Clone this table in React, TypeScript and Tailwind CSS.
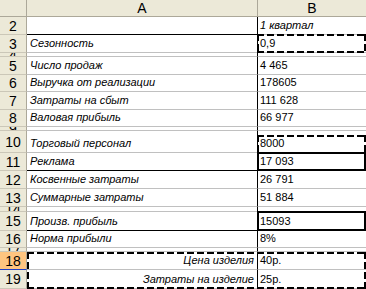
type Mark = 'dash' | 'dashTop' | 'solid';

interface Row {
  n: string;
  h: string;
  a?: string;
  b?: string;
  bi?: boolean;
  black?: boolean;
  mark?: Mark;
  right?: boolean;
  sel?: boolean;
}

const rows: Row[] = [
  { n: '2', h: 'h-[18px]', a: '', b: '1 квартал', bi: true, black: true },
  { n: '3', h: 'h-[18px]', a: 'Сезонность', b: '0,9', mark: 'dash' },
  { n: '4', h: 'h-[4px]' },
  { n: '5', h: 'h-[18px]', a: 'Число продаж', b: '4 465' },
  { n: '6', h: 'h-[17px]', a: 'Выручка от реализации', b: '178605' },
  { n: '7', h: 'h-[18px]', a: 'Затраты на сбыт', b: '111 628' },
  { n: '8', h: 'h-[17px]', a: 'Валовая прибыль', b: '66 977' },
  { n: '9', h: 'h-[4px]' },
  { n: '10', h: 'h-[22px]', a: 'Торговый персонал', b: '8000', mark: 'dashTop' },
  { n: '11', h: 'h-[18px]', a: 'Реклама', b: '17 093', mark: 'solid', black: true },
  { n: '12', h: 'h-[18px]', a: 'Косвенные затраты', b: '26 791' },
  { n: '13', h: 'h-[18px]', a: 'Суммарные затраты', b: '51 884' },
  { n: '14', h: 'h-[5px]' },
  { n: '15', h: 'h-[19px]', a: 'Произв. прибыль', b: '15093', mark: 'solid', black: true },
  { n: '16', h: 'h-[17px]', a: 'Норма прибыли', b: '8%' },
  { n: '17', h: 'h-[4px]' },
];

const tail: Row[] = [
  { n: '18', h: 'h-[18px]', a: 'Цена изделия', b: '40р.', right: true, sel: true },
  { n: '19', h: 'h-[19px]', a: 'Затраты на изделие', b: '25р.', right: true },
];

const dashH = 'absolute left-0 right-0 h-[2px] bg-[image:repeating-linear-gradient(90deg,#000_0_7px,transparent_7px_10px)]';
const dashV = 'absolute top-0 bottom-0 w-[2px] bg-[image:repeating-linear-gradient(180deg,#000_0_7px,transparent_7px_10px)]';

function Marquee({ className, bottom = true }: { className: string; bottom?: boolean }) {
  return (
    <div className={`absolute pointer-events-none ${className}`}>
      <div className={`${dashH} top-0`} />
      {bottom && <div className={`${dashH} bottom-0`} />}
      <div className={`${dashV} left-0`} />
      <div className={`${dashV} right-0`} />
    </div>
  );
}

function SheetRow({ r }: { r: Row }) {
  const small = !r.a && r.a !== '';
  return (
    <div className={`flex ${r.h}`}>
      <div
        className={`w-[27px] shrink-0 flex items-center justify-center overflow-hidden text-[14px] leading-[14px] border-r border-[#aca899] ${
          r.sel ? 'bg-[#ffc580] border-b border-b-[#1f3ec4]' : 'bg-[#ece9d8] border-b border-b-[#cbc7b8]'
        }`}
      >
        {r.n}
      </div>
      <div
        className={`w-[231px] shrink-0 flex items-end overflow-hidden pl-[3px] pr-[3px] pb-[2px] italic text-[11px] leading-[13px] border-r border-r-black border-b ${
          r.black ? 'border-b-black' : 'border-b-[#c0c0c0]'
        } ${r.right ? 'justify-end' : ''}`}
      >
        {!small && r.a}
      </div>
      <div className="relative flex-1 flex items-end overflow-visible pl-[2px] pb-[2px] text-[11px] leading-[13px] border-b border-b-[#c0c0c0]">
        {!small && <span className={r.bi ? 'italic' : ''}>{r.b}</span>}
        {r.mark === 'dash' && <Marquee className="-top-[1px] -left-[1px] right-0 -bottom-[1px]" />}
        {r.mark === 'dashTop' && <Marquee className="top-[4px] -left-[1px] right-0 bottom-0" bottom={false} />}
        {r.mark === 'solid' && <div className="absolute -top-[1px] -left-[1px] right-0 -bottom-[1px] border-2 border-black pointer-events-none" />}
      </div>
    </div>
  );
}

export default function App() {
  return (
    <div className="w-[366px] h-[289px] overflow-hidden bg-white text-black font-['Liberation_Sans',Arial,sans-serif]">
      <div className="flex h-[17px] bg-[#ece9d8] text-[14px] leading-[14px]">
        <div className="w-[27px] shrink-0 border-r border-b border-[#aca899]" />
        <div className="w-[231px] shrink-0 flex items-center justify-center border-r border-b border-[#aca899]">A</div>
        <div className="flex-1 flex items-center justify-center border-b border-[#aca899]">B</div>
      </div>
      {rows.map((r) => (
        <SheetRow key={r.n} r={r} />
      ))}
      <div className="relative">
        {tail.map((r) => (
          <SheetRow key={r.n} r={r} />
        ))}
        <Marquee className="top-0 left-[27px] right-0 bottom-0" />
      </div>
    </div>
  );
}
